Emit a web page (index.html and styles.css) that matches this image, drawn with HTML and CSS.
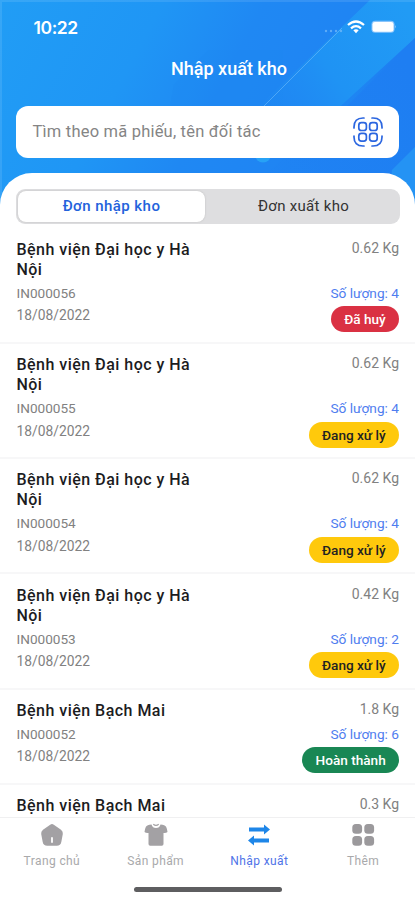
FILE: index.html
```html
<!DOCTYPE html>
<html lang="vi">
<head>
<meta charset="utf-8">
<title>Nhập xuất kho</title>
<link rel="stylesheet" href="styles.css">
</head>
<body>
<div class="app">
  <header class="header">
    <svg class="header-art" viewBox="0 0 415 215" preserveAspectRatio="none" aria-hidden="true">
      <defs>
        <linearGradient id="sky" gradientUnits="userSpaceOnUse" x1="0" y1="0" x2="320" y2="170"><stop offset="0" stop-color="#219df5"/><stop offset=".4" stop-color="#1f96f5"/><stop offset=".65" stop-color="#1f88f3"/><stop offset="1" stop-color="#1f83f3"/></linearGradient>
        <linearGradient id="ray" gradientUnits="userSpaceOnUse" x1="400" y1="0" x2="240" y2="110"><stop offset="0" stop-color="#219bf5"/><stop offset=".5" stop-color="#1f93f4"/><stop offset="1" stop-color="#1f88f3" stop-opacity="0"/></linearGradient>
        <linearGradient id="deep" gradientUnits="userSpaceOnUse" x1="415" y1="80" x2="250" y2="160"><stop offset="0" stop-color="#1e7ef2"/><stop offset="1" stop-color="#1e7ef2" stop-opacity="0"/></linearGradient>
      </defs>
      <path fill="url(#sky)" d="M0 0h415v215H0z"/>
      <path fill="#1f85f2" opacity=".2" d="M174 84l34-34h75v56H170z"/>
      <path fill="url(#ray)" d="M415 0v38L300 153h-90L370 0z"/>
      <path fill="url(#deep)" d="M415 38v120l-40 40H240z"/>
      <path fill="#2493f4" d="M415 147v68h-28l5-45z"/>
      <path stroke="#66b8fa" stroke-width="1" opacity=".65" d="M342 28L264 106"/>
      <circle cx="263" cy="154.500" r="8" fill="#27a2f6"/>
      <path fill="#fff" opacity=".1" d="M0 0h415v2H0zM0 0h2v215H0z"/>
    </svg>
    <div class="status">
      <span class="time">10:22</span>
      <span class="signals">
        <svg width="19" height="4" viewBox="0 0 19 4" fill="#7fc0fa" opacity=".65"><circle cx="2" cy="2" r="1.200"/><circle cx="7" cy="2" r="1.200"/><circle cx="12" cy="2" r="1.200"/><circle cx="17" cy="2" r="1.200"/></svg>
        <svg class="wifi" width="18" height="14" viewBox="0 0 18 14" fill="none" stroke="#fff" stroke-width="2.300"><path d="M1 5Q9-2 17 5M4 8.300q5-4.300 10 0"/><path d="M6.300 10.300q2.700-2 5.400 0L9 13.200z" fill="#fff" stroke="none"/></svg>
        <svg class="battery" width="26" height="14" viewBox="0 0 26 14"><rect x=".5" y=".8" width="23" height="12" rx="3.600" fill="#8ac5fb"/><rect x="1.500" y="2" width="21" height="9.800" rx="2.400" fill="#fff"/><path d="M24.300 5q1.500 1.800 0 3.600z" fill="#a8d4fc"/></svg>
      </span>
    </div>
    <h1 class="title">Nhập xuất kho</h1>
    <div class="search">
      <span class="placeholder">Tìm theo mã phiếu, tên đối tác</span>
      <svg width="30" height="30" viewBox="0 0 30 30" fill="none" stroke="#2b66e0" stroke-width="1.700" stroke-linecap="round">
        <path d="M1 11V10Q1 1 10 1h1M19 1h1q9 0 9 9v1M29 19v1q0 9-9 9h-1M11 29h-1Q1 29 1 20v-1"/>
        <rect x="5.800" y="5.700" width="7.600" height="7.800" rx="2.600"/><rect x="16.600" y="5.700" width="7.600" height="7.800" rx="2.600"/><rect x="5.800" y="16.400" width="7.600" height="7.800" rx="2.600"/><rect x="16.600" y="16.400" width="7.600" height="7.800" rx="2.600"/>
      </svg>
    </div>
  </header>
  <main class="panel">
    <div class="tabs"><span class="tab active">Đơn nhập kho</span><span class="tab">Đơn xuất kho</span></div>
    <div class="list">
      <article class="item"><h2 class="name">Bệnh viện Đại học y Hà Nội</h2><span class="weight">0.62 Kg</span><span class="code">IN000056</span><span class="qty">Số lượng: 4</span><span class="date">18/08/2022</span><span class="badge cancelled">Đã huỷ</span></article>
      <article class="item"><h2 class="name">Bệnh viện Đại học y Hà Nội</h2><span class="weight">0.62 Kg</span><span class="code">IN000055</span><span class="qty">Số lượng: 4</span><span class="date">18/08/2022</span><span class="badge pending">Đang xử lý</span></article>
      <article class="item"><h2 class="name">Bệnh viện Đại học y Hà Nội</h2><span class="weight">0.62 Kg</span><span class="code">IN000054</span><span class="qty">Số lượng: 4</span><span class="date">18/08/2022</span><span class="badge pending">Đang xử lý</span></article>
      <article class="item"><h2 class="name">Bệnh viện Đại học y Hà Nội</h2><span class="weight">0.42 Kg</span><span class="code">IN000053</span><span class="qty">Số lượng: 2</span><span class="date">18/08/2022</span><span class="badge pending">Đang xử lý</span></article>
      <article class="item"><h2 class="name">Bệnh viện Bạch Mai</h2><span class="weight">1.8 Kg</span><span class="code">IN000052</span><span class="qty">Số lượng: 6</span><span class="date">18/08/2022</span><span class="badge done">Hoàn thành</span></article>
      <article class="item"><h2 class="name">Bệnh viện Bạch Mai</h2><span class="weight">0.3 Kg</span></article>
    </div>
  </main>
  <footer class="footer">
    <nav class="nav">
      <div class="nav-item"><svg width="24" height="24" viewBox="0 0 24 24"><path fill="#a3a1a4" d="M10.200 1.700q1.800-1.300 3.600 0l7.200 5q2.200 1.700 1.800 4.200L21.300 19q-.7 3.800-4.500 3.800H7.200q-3.800 0-4.500-3.800L1.200 10.900Q.8 8.400 3 6.700z"/><path d="M12 15v4" stroke="#fff" stroke-width="1.800" stroke-linecap="round"/></svg><span>Trang chủ</span></div>
      <div class="nav-item"><svg width="24" height="24" viewBox="0 0 24 24"><path fill="#a3a1a4" d="M7.500 1.500q1 3.500 4.500 3.500t4.500-3.500q4.500.5 5.600 2.300Q23.200 6 23.500 9q-1.500 1.300-4 1V21q0 1.700-1.700 1.700H6.200Q4.500 22.700 4.500 21V10q-2.500.3-4-1 .3-3 1.400-5.200Q3 2 7.500 1.500z"/><path d="M9.300 1.200q2.700 2.300 5.400 0" fill="none" stroke="#a3a1a4" stroke-width="1.200"/></svg><span>Sản phẩm</span></div>
      <div class="nav-item selected"><svg width="24" height="24" viewBox="0 0 24 24"><g fill="#1e86e8"><path d="M2 4.500h15V1.500L23 6.500l-6 5V8.600H2z"/><path d="M22 15.400H7v-2.900L1 17.500l6 5v-3h15z"/></g></svg><span>Nhập xuất</span></div>
      <div class="nav-item"><svg width="24" height="24" viewBox="0 0 24 24" fill="#9b999c"><rect x="1.300" y="1" width="9.800" height="9.800" rx="3.500"/><rect x="13.300" y="1" width="9.800" height="9.800" rx="3.500"/><rect x="1.300" y="13" width="9.800" height="9.800" rx="3.500"/><rect x="13.300" y="13" width="9.800" height="9.800" rx="3.500"/></svg><span>Thêm</span></div>
    </nav>
    <div class="home-indicator"></div>
  </footer>
</div>
</body>
</html>
```
FILE: styles.css
```css
* { box-sizing: border-box; }
body { margin: 0; font-family: Roboto, "Liberation Sans", sans-serif; color: #1c1c1e; background: #fff; }
h1, h2 { margin: 0; }
svg { display: block; flex: none; }
.app { width: 415px; height: 900px; display: flex; flex-direction: column; overflow: hidden; }
.header { position: relative; flex: none; height: 173px; padding: 0 16px; }
.header-art { position: absolute; left: 0; top: 0; width: 415px; height: 215px; }
.status, .title, .search { position: relative; }
.status { height: 54px; padding: 0 2px 0 17.500px; display: flex; align-items: center; justify-content: space-between; color: #fff; }
.time { font: 600 17.500px/20px Inter, sans-serif; letter-spacing: -.4px; padding-top: 1px; }
.signals { display: flex; align-items: center; }
.signals svg:first-child { margin-top: 7px; }
.wifi { margin-left: 4px; }
.battery { margin-left: 6px; }
.title { height: 30px; line-height: 30px; text-align: center; padding-left: 43px; color: #fff; font-size: 18px; font-weight: 500; white-space: nowrap; }
.search { margin-top: 22px; height: 51.500px; padding: 0 16.500px 0 16.500px; border-radius: 12px; background: #fff; display: flex; align-items: center; justify-content: space-between; }
.placeholder { color: #858585; font-size: 16.500px; letter-spacing: .2px; white-space: nowrap; }
.panel { position: relative; flex: 1; min-height: 0; overflow: hidden; background: #fff; border-radius: 32px 32px 0 0; padding-top: 16px; }
.tabs { height: 35px; margin: 0 15px 0 16px; padding: 2px; border-radius: 9px; background: #dedee0; display: grid; grid-template-columns: 187px 1fr; }
.tab { border-radius: 8px; text-align: center; font-size: 15px; line-height: 31px; padding-left: 4px; color: #333; letter-spacing: .3px; }
.tab.active { padding-left: 0; background: #fff; color: #2362dc; font-weight: 500; letter-spacing: .45px; box-shadow: 0 0 2px #bbb; }
.list { padding-top: 4.800px; }
.item { display: grid; grid-template-columns: 190px 1fr; grid-template-rows: auto 26.300px 26px; padding: 11.300px 16px 9.600px 16.500px; border-bottom: 2px solid #f7f7f8; }
.name { font-size: 16px; font-weight: 500; line-height: 20px; letter-spacing: .47px; }
.weight, .code, .date { color: #818181; }
.weight { text-align: right; font-size: 14px; line-height: 17px; }
.code { font-size: 13.600px; line-height: 26px; }
.qty { text-align: right; font-size: 13.700px; line-height: 26px; color: #4f7def; }
.date { font-size: 13.800px; line-height: 18px; }
.badge { justify-self: end; height: 26px; padding: 0 13.300px; border-radius: 13px; font-size: 13.600px; font-weight: 500; line-height: 26px; white-space: nowrap; color: #fff; }
.cancelled { background: #da3143; }
.pending { background: #ffc90c; color: #222; }
.done { background: #198754; }
.footer { flex: none; height: 83px; border-top: 1px solid #f0f0f1; background: #fff; }
.nav { display: grid; grid-template-columns: repeat(4, 1fr); height: 69px; padding-top: 5px; }
.nav-item { display: flex; flex-direction: column; align-items: center; gap: 6px; color: #a9a9ab; font-size: 12px; line-height: 17px; letter-spacing: .4px; }
.selected { color: #4f73e8; }
.home-indicator { width: 148px; height: 5px; margin: 0 auto; border-radius: 3px; background: #5e5e60; }
```
